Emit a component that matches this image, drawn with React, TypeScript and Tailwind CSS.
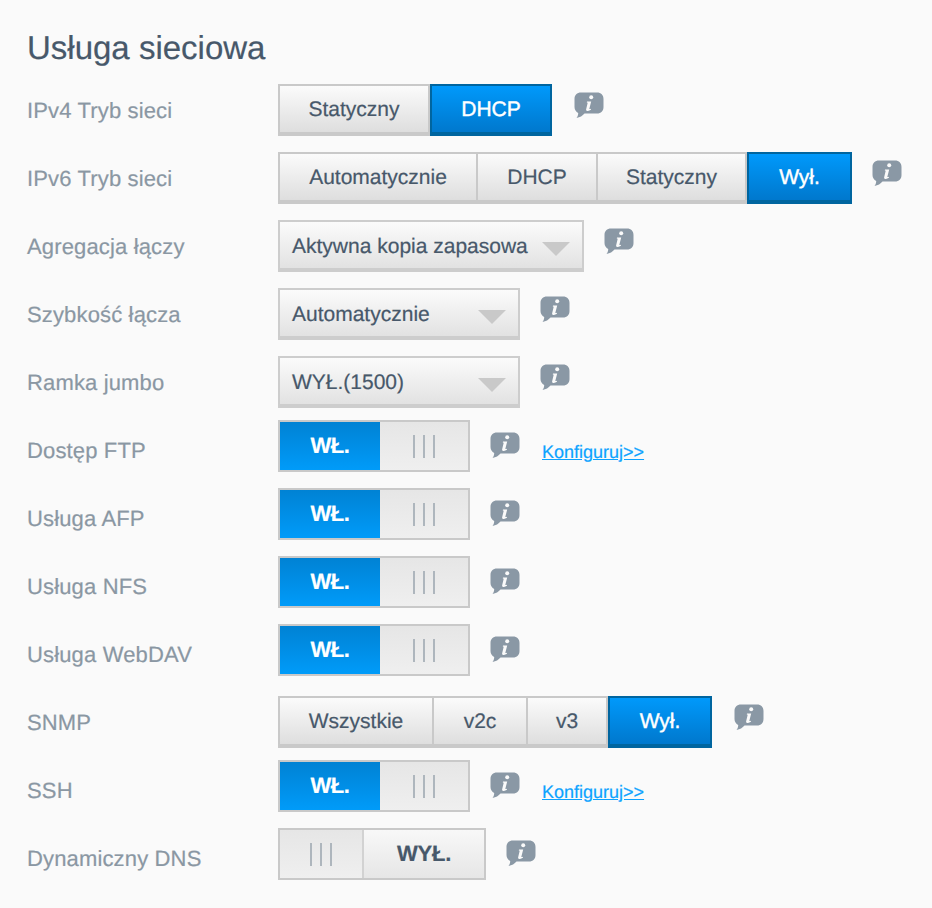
const Font = "font-['Liberation_Sans',Arial,sans-serif]";

function InfoIcon() {
  return (
    <svg width="30" height="27" viewBox="0 0 30 27" className="mt-2 shrink-0 blur-[0.4px]" aria-hidden="true">
      <path
        d="M7 0.5H23C27 0.5 29.5 3 29.5 7V15C29.5 19 27 21.5 23 21.5H10.5C8.5 23.8 6 25.4 2.5 26C3.6 24.6 4.2 23 4.2 21C2 19.8 0.5 17.8 0.5 15V7C0.5 3 3 0.5 7 0.5Z"
        fill="#8a98a5"
      />
      <circle cx="17.2" cy="5.2" r="2" fill="#fafafa" />
      <path d="M13 9.4H17.2L15.4 16.4C15.2 17.2 15.6 17.3 16.8 16.7L17 17.8C15.6 18.7 14.4 19.1 13.3 18.9C12.2 18.7 11.9 18 12.2 17L13.7 10.8L12.8 10.5Z" fill="#fafafa" />
    </svg>
  );
}

function Segment({ label, active, className }: { label: string; active?: boolean; className: string }) {
  if (active) {
    return (
      <div className={`-my-0.5 -mr-0.5 flex h-[52px] items-center justify-center border-2 border-b-4 border-[#00659f] bg-linear-to-b from-[#0099fb] to-[#0078cd] pt-0.5 text-[21px] text-white [-webkit-text-stroke:0.4px_white] ${className}`}>
        {label}
      </div>
    );
  }
  return (
    <div className={`flex h-full items-center justify-center border-r-2 border-[#c9c9c9] bg-linear-to-b from-[#fbfbfb] to-[#dedede] pt-0.5 text-[21px] text-[#47586a] last:border-r-0 ${className}`}>
      {label}
    </div>
  );
}

function SegmentGroup({ children }: { children: React.ReactNode }) {
  return <div className="flex h-[52px] border-2 border-b-4 border-[#c9c9c9]">{children}</div>;
}

function Select({ value, className }: { value: string; className: string }) {
  return (
    <div className={`flex h-[52px] items-center justify-between border-2 border-b-4 border-[#cdcdcd] bg-linear-to-b from-[#fbfbfb] to-[#e2e2e2] pl-3 pr-3 pt-1 text-[21px] text-[#47586a] ${className}`}>
      <span>{value}</span>
      <span className="mt-1 h-0 w-0 border-x-[14px] border-t-[14px] border-x-transparent border-t-[#c9c9c9]" />
    </div>
  );
}

function Grip() {
  return (
    <div className="flex gap-2">
      <span className="h-[23px] w-0.5 bg-[#aeb6bd]" />
      <span className="h-[23px] w-0.5 bg-[#aeb6bd]" />
      <span className="h-[23px] w-0.5 bg-[#aeb6bd]" />
    </div>
  );
}

function ToggleOn() {
  return (
    <div className="-mt-1 flex h-[52px] w-[192px] border-2 border-[#c9c9c9]">
      <div className="flex w-[100px] items-center justify-center bg-linear-to-b from-[#0082d4] to-[#009bf9] pb-0.5 text-[22px] font-bold tracking-[-0.5px] text-white">
        WŁ.
      </div>
      <div className="flex flex-1 items-center justify-center bg-linear-to-b from-[#e6e6e6] to-[#efefef]">
        <Grip />
      </div>
    </div>
  );
}

function ToggleOff() {
  return (
    <div className="-mt-1 flex h-[52px] w-[208px] border-2 border-[#c9c9c9]">
      <div className="flex w-[82px] items-center justify-center bg-linear-to-b from-[#e6e6e6] to-[#efefef]">
        <Grip />
      </div>
      <div className="flex flex-1 items-center justify-center border-l-2 border-[#d2d2d2] bg-linear-to-b from-[#f8f8f8] to-[#e6e6e6] pb-0.5 text-[22px] font-bold tracking-[-0.2px] text-[#47586a]">
        WYŁ.
      </div>
    </div>
  );
}

function ConfigLink() {
  return (
    <a href="#" className="mt-[18px] ml-[22px] text-[18px] leading-5 text-[#0da3ff] underline">
      Konfiguruj&gt;&gt;
    </a>
  );
}

function Row({ label, children, link, wide }: { label: string; children: React.ReactNode; link?: boolean; wide?: boolean }) {
  return (
    <div className="flex h-[68px] items-start">
      <div className="flex h-[52px] w-[251px] shrink-0 items-center text-[22px] tracking-[0.15px] text-[#8a97a3]">{label}</div>
      {children}
      <div className={`flex items-start ${wide ? "ml-[22px]" : "ml-5"}`}>
        <InfoIcon />
        {link && <ConfigLink />}
      </div>
    </div>
  );
}

export default function App() {
  return (
    <div className={`${Font} h-[908px] w-[932px] overflow-hidden bg-[#fafafa] px-[27px] [-webkit-text-stroke:0.2px] [text-rendering:geometricPrecision]`}>
      <h1 className="flex h-[84px] items-center pt-[10px] text-[33px] leading-none text-[#47586a]">Usługa sieciowa</h1>
      <Row label="IPv4 Tryb sieci" wide>
        <SegmentGroup>
          <Segment label="Statyczny" className="w-[150px]" />
          <Segment label="DHCP" active className="w-[122px]" />
        </SegmentGroup>
      </Row>
      <Row label="IPv6 Tryb sieci">
        <SegmentGroup>
          <Segment label="Automatycznie" className="w-[198px]" />
          <Segment label="DHCP" className="w-[120px]" />
          <Segment label="Statyczny" className="w-[149px]" />
          <Segment label="Wył." active className="w-[105px]" />
        </SegmentGroup>
      </Row>
      <Row label="Agregacja łączy">
        <Select value="Aktywna kopia zapasowa" className="w-[306px]" />
      </Row>
      <Row label="Szybkość łącza">
        <Select value="Automatycznie" className="w-[242px]" />
      </Row>
      <Row label="Ramka jumbo">
        <Select value="WYŁ.(1500)" className="w-[242px]" />
      </Row>
      <Row label="Dostęp FTP" link>
        <ToggleOn />
      </Row>
      <Row label="Usługa AFP">
        <ToggleOn />
      </Row>
      <Row label="Usługa NFS">
        <ToggleOn />
      </Row>
      <Row label="Usługa WebDAV">
        <ToggleOn />
      </Row>
      <Row label="SNMP" wide>
        <SegmentGroup>
          <Segment label="Wszystkie" className="w-[154px]" />
          <Segment label="v2c" className="w-[94px]" />
          <Segment label="v3" className="w-[80px]" />
          <Segment label="Wył." active className="w-[104px]" />
        </SegmentGroup>
      </Row>
      <Row label="SSH" link>
        <ToggleOn />
      </Row>
      <Row label="Dynamiczny DNS">
        <ToggleOff />
      </Row>
    </div>
  );
}
